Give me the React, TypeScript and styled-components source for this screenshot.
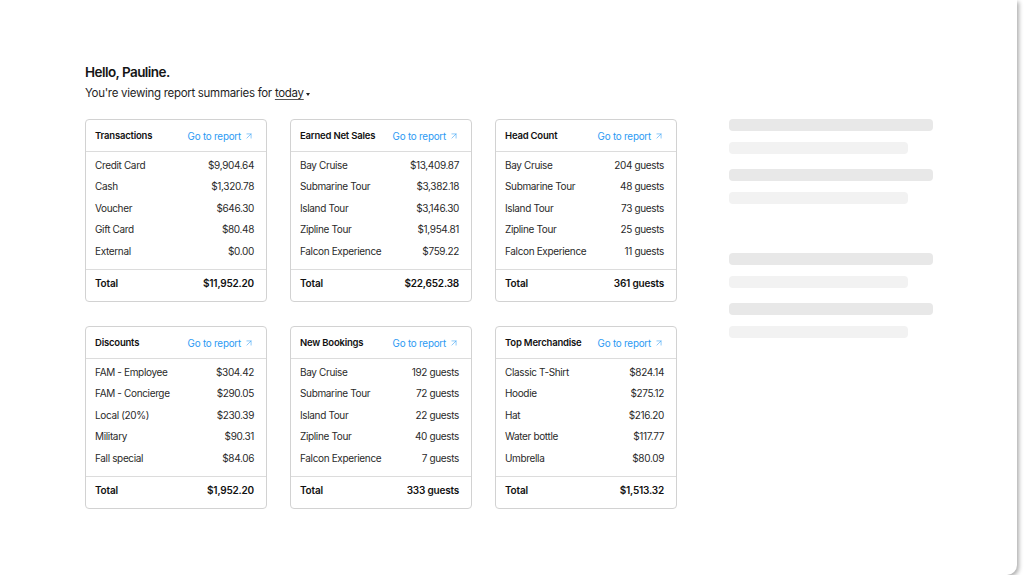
import React from "react";
import styled, { createGlobalStyle } from "styled-components";
import { ArrowUpRight } from "lucide-react";

const Global = createGlobalStyle`
  html, body { margin: 0; padding: 0; background: #ffffff; }
  body { font-family: Inter, "Liberation Sans", sans-serif; color: #1c1c1c; -webkit-font-smoothing: antialiased; }
  * { box-sizing: border-box; }
`;

const Frame = styled.div`
  width: 1017px;
  height: 575px;
  background: #fff;
  border-radius: 0 0 10px 0;
  box-shadow: 2px 2px 4px rgba(0, 0, 0, 0.32);
  padding: 62px 0 0 85px;
  overflow: hidden;
`;

const Greeting = styled.h1`
  margin: 0;
  font-size: 13.5px;
  font-weight: 600;
  letter-spacing: -0.55px;
  line-height: 20px;
  color: #151515;
`;

const Subtitle = styled.p`
  margin: 1px 0 0;
  font-size: 11.5px;
  letter-spacing: -0.3px;
  line-height: 20px;
  color: #1f1f1f;
  display: flex;
  align-items: center;
`;

const DateLink = styled.span`
  margin-left: 3px;
  text-decoration: underline;
  text-underline-offset: 2px;
  text-decoration-color: #555;
`;

const Caret = styled.span`
  display: inline-block;
  margin-left: 2px;
  margin-top: 2px;
  width: 0;
  height: 0;
  border-left: 2.5px solid transparent;
  border-right: 2.5px solid transparent;
  border-top: 3px solid #222;
`;

const Body = styled.div`
  display: flex;
  align-items: flex-start;
  margin-top: 16px;
`;

const CardGrid = styled.div`
  display: grid;
  grid-template-columns: repeat(3, 182px);
  column-gap: 23px;
  row-gap: 24px;
`;

const Card = styled.section`
  border: 1px solid #d2d2d2;
  border-radius: 4px;
  height: 183px;
  display: flex;
  flex-direction: column;
  font-size: 10px;
  letter-spacing: -0.35px;
`;

const CardHeader = styled.header`
  height: 32px;
  display: flex;
  align-items: center;
  justify-content: space-between;
  padding: 0 12px 1px 9px;
  border-bottom: 1px solid #dcdcdc;
`;

const CardTitle = styled.h2`
  margin: 0;
  font-size: 9.5px;
  font-weight: 600;
  letter-spacing: -0.2px;
  color: #111;
`;

const ReportLink = styled.a`
  display: flex;
  align-items: center;
  gap: 3px;
  color: #2b9af3;
  font-size: 9.8px;
  letter-spacing: -0.2px;
  text-decoration: none;
  margin-top: 2px;
`;

const Rows = styled.div`
  flex: 1;
  padding: 2px 12px 0 9px;
  border-bottom: 1px solid #dcdcdc;
`;

const Row = styled.div`
  height: 21.5px;
  display: flex;
  align-items: center;
  justify-content: space-between;
  color: #2a2a2a;
`;

const TotalRow = styled.footer`
  height: 31px;
  display: flex;
  align-items: center;
  justify-content: space-between;
  padding: 0 12px 5px 9px;
  font-weight: 600;
  letter-spacing: -0.2px;
  color: #111;
`;

const SkeletonColumn = styled.div`
  margin-left: 52px;
  display: flex;
  flex-direction: column;
`;

const SkeletonGroup = styled.div`
  display: flex;
  flex-direction: column;
  gap: 11px;
  margin-bottom: 15px;
  &:nth-child(2) { margin-bottom: 49px; }
`;

const SkeletonBar = styled.div<{ $w: number; $shade: string }>`
  width: ${(p) => p.$w}px;
  height: 12px;
  border-radius: 4px;
  background: ${(p) => p.$shade};
`;

type CardData = { title: string; rows: [string, string][]; total: string };

const cards: CardData[] = [
  {
    title: "Transactions",
    rows: [
      ["Credit Card", "$9,904.64"],
      ["Cash", "$1,320.78"],
      ["Voucher", "$646.30"],
      ["Gift Card", "$80.48"],
      ["External", "$0.00"],
    ],
    total: "$11,952.20",
  },
  {
    title: "Earned Net Sales",
    rows: [
      ["Bay Cruise", "$13,409.87"],
      ["Submarine Tour", "$3,382.18"],
      ["Island Tour", "$3,146.30"],
      ["Zipline Tour", "$1,954.81"],
      ["Falcon Experience", "$759.22"],
    ],
    total: "$22,652.38",
  },
  {
    title: "Head Count",
    rows: [
      ["Bay Cruise", "204 guests"],
      ["Submarine Tour", "48 guests"],
      ["Island Tour", "73 guests"],
      ["Zipline Tour", "25 guests"],
      ["Falcon Experience", "11 guests"],
    ],
    total: "361 guests",
  },
  {
    title: "Discounts",
    rows: [
      ["FAM - Employee", "$304.42"],
      ["FAM - Concierge", "$290.05"],
      ["Local (20%)", "$230.39"],
      ["Military", "$90.31"],
      ["Fall special", "$84.06"],
    ],
    total: "$1,952.20",
  },
  {
    title: "New Bookings",
    rows: [
      ["Bay Cruise", "192 guests"],
      ["Submarine Tour", "72 guests"],
      ["Island Tour", "22 guests"],
      ["Zipline Tour", "40 guests"],
      ["Falcon Experience", "7 guests"],
    ],
    total: "333 guests",
  },
  {
    title: "Top Merchandise",
    rows: [
      ["Classic T-Shirt", "$824.14"],
      ["Hoodie", "$275.12"],
      ["Hat", "$216.20"],
      ["Water bottle", "$117.77"],
      ["Umbrella", "$80.09"],
    ],
    total: "$1,513.32",
  },
];

function ReportCard({ data }: { data: CardData }) {
  return (
    <Card>
      <CardHeader>
        <CardTitle>{data.title}</CardTitle>
        <ReportLink href="#">
          Go to report <ArrowUpRight size={10} strokeWidth={1.3} />
        </ReportLink>
      </CardHeader>
      <Rows>
        {data.rows.map(([label, value]) => (
          <Row key={label}>
            <span>{label}</span>
            <span>{value}</span>
          </Row>
        ))}
      </Rows>
      <TotalRow>
        <span>Total</span>
        <span>{data.total}</span>
      </TotalRow>
    </Card>
  );
}

export default function App() {
  return (
    <>
      <Global />
      <Frame>
        <Greeting>Hello, Pauline.</Greeting>
        <Subtitle>
          You're viewing report summaries for <DateLink>today</DateLink>
          <Caret />
        </Subtitle>
        <Body>
          <CardGrid>
            {cards.map((c) => (
              <ReportCard key={c.title} data={c} />
            ))}
          </CardGrid>
          <SkeletonColumn>
            {[0, 1, 2, 3].map((i) => (
              <SkeletonGroup key={i}>
                <SkeletonBar $w={204} $shade="#e8e8e8" />
                <SkeletonBar $w={179} $shade="#f2f2f2" />
              </SkeletonGroup>
            ))}
          </SkeletonColumn>
        </Body>
      </Frame>
    </>
  );
}
